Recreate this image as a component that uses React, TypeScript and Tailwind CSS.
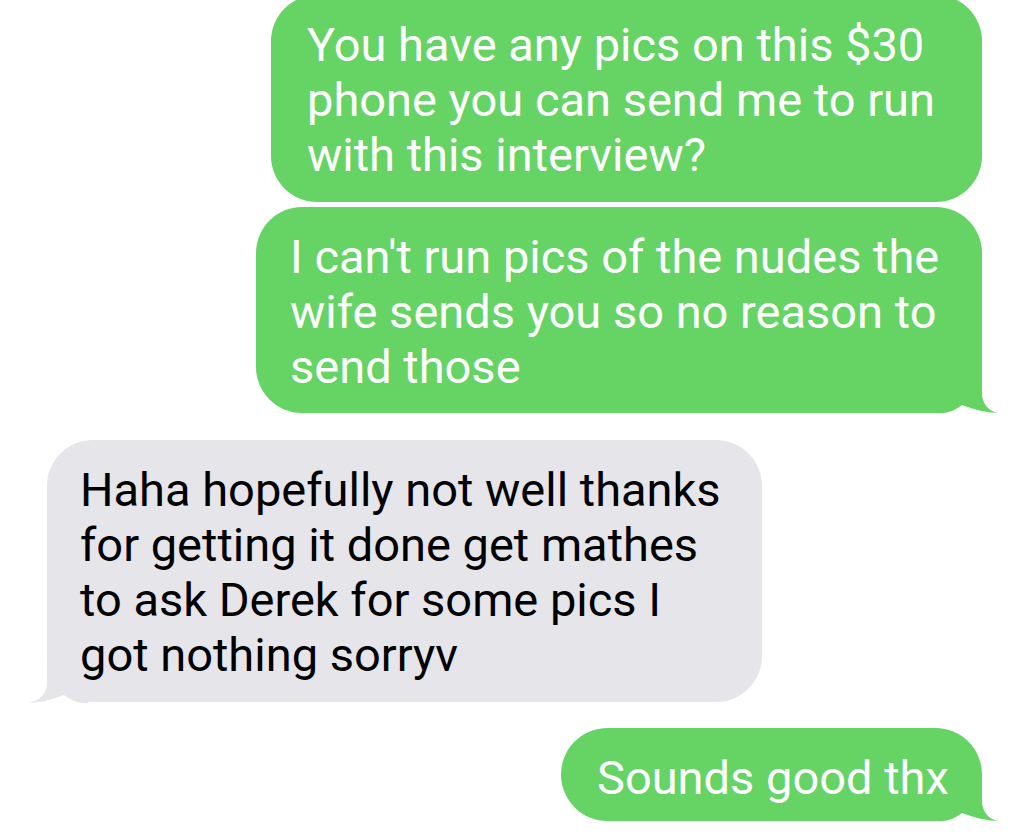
import React from "react";

const GREEN = "#65d465";

function TailRight({ color }: { color: string }) {
  return (
    <svg
      className="absolute right-[-16px] bottom-0"
      width="60"
      height="45"
      viewBox="0 0 60 45"
    >
      <path
        d="M0 0 L44 0 L44 25 C44 35 50 43 60 45 C52 45 36 42 24 37 C18 42 10 45 4 45 L0 45 Z"
        fill={color}
      />
    </svg>
  );
}

function TailLeft({ color }: { color: string }) {
  return (
    <svg
      className="absolute left-[-19px] bottom-[-1px]"
      width="60"
      height="45"
      viewBox="0 0 60 45"
    >
      <path
        d="M60 0 L19 0 L19 25 C19 35 12 43 0 45 C8 45 24 42 36 37 C42 42 50 45 56 45 L60 45 Z"
        fill={color}
      />
    </svg>
  );
}

export default function App() {
  const font = { fontFamily: 'Roboto, "Liberation Sans", Arial, sans-serif' };
  return (
    <div
      className="w-[1024px] h-[838px] bg-white overflow-hidden flex flex-col text-[47px] leading-[55px]"
      style={font}
    >
      <div className="self-end mr-[42px] mt-[-5px] w-[711px] rounded-[46px] bg-[#65d465] text-white pl-[36px] pt-[22px] pb-[20px] whitespace-nowrap">
        <div>You have any pics on this $30</div>
        <div>phone you can send me to run</div>
        <div>with this interview?</div>
      </div>

      <div className="relative self-end mr-[42px] mt-[5px] w-[726px] rounded-[46px] bg-[#65d465] text-white pl-[34px] pt-[22px] pb-[19px] whitespace-nowrap">
        <TailRight color={GREEN} />
        <div className="relative">
          <div>I can't run pics of the nudes the</div>
          <div>wife sends you so no reason to</div>
          <div>send those</div>
        </div>
      </div>

      <div className="relative self-start ml-[47px] mt-[27px] w-[715px] rounded-[46px] bg-[#e5e5ea] text-black pl-[33px] pt-[22px] pb-[20px] whitespace-nowrap">
        <TailLeft color="#e5e5ea" />
        <div className="relative">
          <div>Haha hopefully not well thanks</div>
          <div>for getting it done get mathes</div>
          <div>to ask Derek for some pics I</div>
          <div>got nothing sorryv</div>
        </div>
      </div>

      <div className="relative self-end mr-[42px] mt-[26px] w-[421px] rounded-[47px] bg-[#65d465] text-white pl-[36px] pt-[22px] pb-[16px] whitespace-nowrap">
        <TailRight color={GREEN} />
        <div className="relative">Sounds good thx</div>
      </div>
    </div>
  );
}
